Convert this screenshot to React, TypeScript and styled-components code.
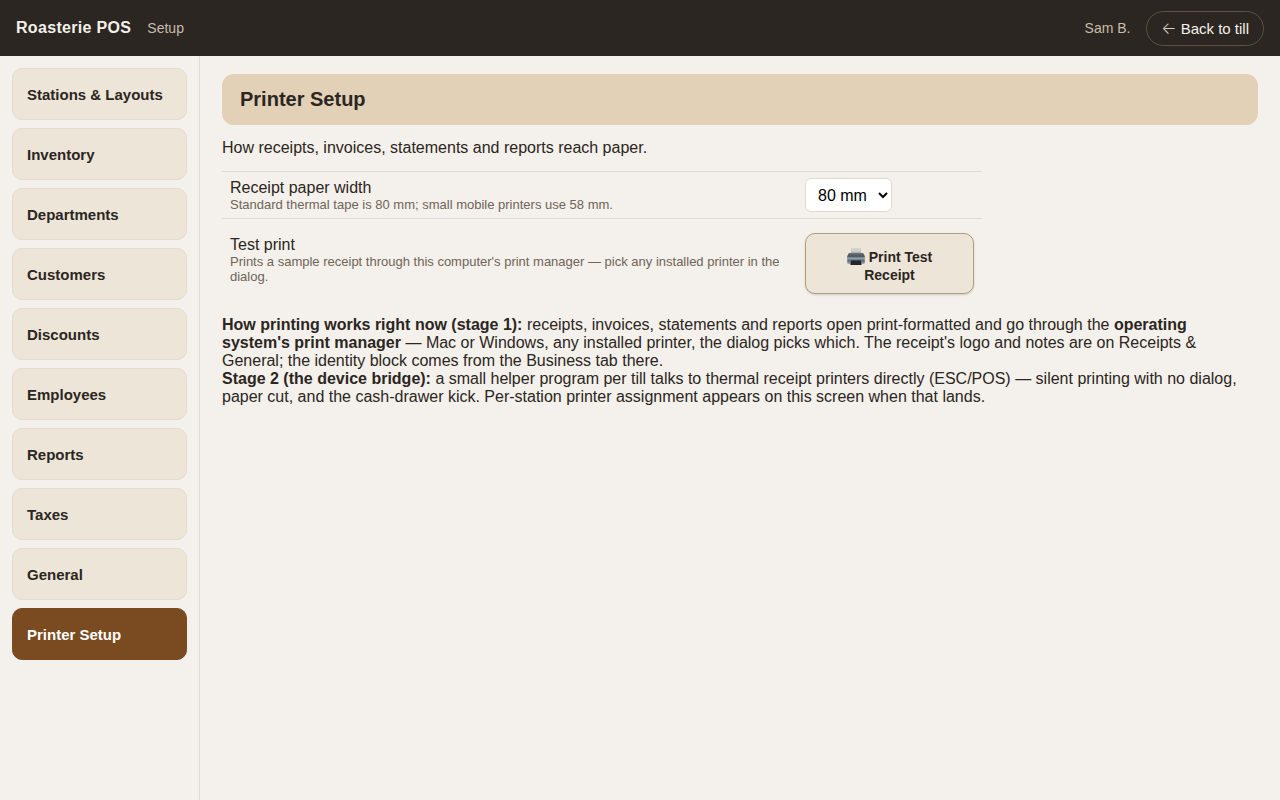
import React from "react";
import styled, { createGlobalStyle } from "styled-components";

const GlobalStyle = createGlobalStyle`
  *, *::before, *::after { box-sizing: border-box; }
  body {
    margin: 0;
    background: #f4f0eb;
    color: #2b2621;
    font-family: "Liberation Sans", Helvetica, Arial, sans-serif;
    font-size: 16px;
    line-height: 18px;
  }
  button, select { font-family: inherit; }
`;

const Page = styled.div`
  display: flex;
  flex-direction: column;
  min-height: 100vh;
`;

const TopBar = styled.header`
  display: flex;
  align-items: center;
  gap: 16px;
  height: 56px;
  padding: 0 16px;
  background: #2b2621;
  color: #f4f0eb;
`;

const Brand = styled.strong`
  letter-spacing: 0.02em;
`;

const TopNote = styled.span<{ $end?: boolean }>`
  margin-left: ${(p) => (p.$end ? "auto" : "0")};
  color: #c9bda9;
  font-size: 14px;
`;

const BackButton = styled.button`
  height: 35px;
  padding: 0 14px;
  border: 1px solid #5b5145;
  border-radius: 18px;
  background: transparent;
  color: #f4f0eb;
  font-size: 15px;
  cursor: pointer;
`;

const Arrow = styled.span`
  display: inline-flex;
  justify-content: center;
  width: 15px;
  color: #d3cec8;
  font-family: Inter, sans-serif;
  font-size: 16px;
  font-weight: 300;
  line-height: 15px;
`;

const Body = styled.div`
  display: flex;
  flex: 1;
`;

const Sidebar = styled.nav`
  display: flex;
  flex-direction: column;
  flex: none;
  gap: 8px;
  width: 200px;
  padding: 12px;
  border-right: 1px solid #dfdad2;
`;

const NavButton = styled.button<{ $active?: boolean }>`
  height: 52px;
  padding: 0 14px;
  border: 1px solid ${(p) => (p.$active ? "#7a4a20" : "#e3dccf")};
  border-radius: 10px;
  background: ${(p) => (p.$active ? "#7a4a20" : "#ede5d8")};
  color: ${(p) => (p.$active ? "#ffffff" : "#2b2621")};
  font-size: 15px;
  font-weight: 700;
  text-align: left;
  cursor: pointer;
`;

const Content = styled.main`
  flex: 1;
  min-width: 0;
  padding: 18px 22px;
`;

const Title = styled.h1`
  margin: 0 0 14px;
  padding: 14px 18px;
  border-radius: 12px;
  background: #e2d1b7;
  font-size: 20px;
  line-height: 23px;
`;

const Text = styled.p`
  margin: 0;
`;

const Settings = styled.div`
  max-width: 760px;
  margin: 14px 0 16px;
`;

const Setting = styled.div`
  display: grid;
  grid-template-columns: 1fr 169px;
  column-gap: 16px;
  align-items: center;
  padding: 6px 8px;
  border-top: 1px solid #dfdad2;
`;

const SettingName = styled.label`
  display: block;
`;

const Hint = styled.div`
  color: #6f6557;
  font-size: 13px;
  line-height: 15px;
`;

const WidthSelect = styled.select`
  width: 87px;
  height: 34px;
  padding: 0 0 0 8px;
  border: 1px solid #e0dace;
  border-radius: 6px;
  background: #ffffff;
  color: #000000;
  font-size: 16px;
`;

const PrintButton = styled.button`
  width: 100%;
  min-height: 61px;
  margin-top: 8px;
  padding: 14px 28px 9px;
  border: 1px solid #b39d7c;
  border-radius: 10px;
  background: #ede5d8;
  box-shadow: 0 1px 2px rgba(43, 38, 33, 0.18);
  color: #2b2621;
  font-size: 14px;
  font-weight: 700;
  line-height: 18px;
  cursor: pointer;
`;

const PrinterSvg = styled.svg`
  margin: -4px 4px -4px 0;
  vertical-align: 0;
`;

const PrinterIcon = () => (
  <PrinterSvg width="18" height="18" viewBox="0 0 18 18" aria-hidden="true">
    <defs>
      <linearGradient id="casing" x1="0" y1="0" x2="0" y2="1">
        <stop offset="0" stopColor="#626a72" />
        <stop offset="0.3" stopColor="#4c565f" />
        <stop offset="0.5" stopColor="#8996a1" />
        <stop offset="0.7" stopColor="#5d6872" />
        <stop offset="1" stopColor="#a9b0b6" />
      </linearGradient>
    </defs>
    <path d="M4 0h10v6H4z" fill="#d3d1ce" />
    <path d="M4 3.500h10V6H4z" fill="#b4b5b6" />
    <path d="M2 5h14l1.800 3v6.500q0 1.500-1.500 1.500H1.700q-1.500 0-1.500-1.500V8z" fill="url(#casing)" />
    <path d="M3.500 5h11l.8 1.500H2.700z" fill="#646b72" />
    <path d="M1 9.500h16V11H1z" fill="#8c9dab" />
    <path d="M4 12.500h10l.6 4.500H3.400z" fill="#24272a" />
  </PrinterSvg>
);

const sections = [
  "Stations & Layouts",
  "Inventory",
  "Departments",
  "Customers",
  "Discounts",
  "Employees",
  "Reports",
  "Taxes",
  "General",
  "Printer Setup",
];

export default function App() {
  return (
    <Page>
      <GlobalStyle />
      <TopBar>
        <Brand>Roasterie POS</Brand>
        <TopNote>Setup</TopNote>
        <TopNote $end>Sam B.</TopNote>
        <BackButton type="button">
          <Arrow>←</Arrow> Back to till
        </BackButton>
      </TopBar>
      <Body>
        <Sidebar aria-label="Setup sections">
          {sections.map((name) => (
            <NavButton key={name} type="button" $active={name === "Printer Setup"}>
              {name}
            </NavButton>
          ))}
        </Sidebar>
        <Content>
          <Title>Printer Setup</Title>
          <Text>How receipts, invoices, statements and reports reach paper.</Text>
          <Settings>
            <Setting>
              <div>
                <SettingName htmlFor="paper-width">Receipt paper width</SettingName>
                <Hint>Standard thermal tape is 80 mm; small mobile printers use 58 mm.</Hint>
              </div>
              <WidthSelect id="paper-width" defaultValue="80">
                <option value="80">80 mm</option>
                <option value="58">58 mm</option>
              </WidthSelect>
            </Setting>
            <Setting>
              <div>
                <SettingName htmlFor="test-print">Test print</SettingName>
                <Hint>
                  Prints a sample receipt through this computer's print manager — pick any
                  installed printer in the dialog.
                </Hint>
              </div>
              <PrintButton id="test-print" type="button">
                <PrinterIcon />
                Print Test Receipt
              </PrintButton>
            </Setting>
          </Settings>
          <Text>
            <strong>How printing works right now (stage 1):</strong> receipts, invoices,
            statements and reports open print-formatted and go through the{" "}
            <strong>operating system's print manager</strong> — Mac or Windows, any installed
            printer, the dialog picks which. The receipt's logo and notes are on Receipts &amp;
            General; the identity block comes from the Business tab there.
          </Text>
          <Text>
            <strong>Stage 2 (the device bridge):</strong> a small helper program per till talks
            to thermal receipt printers directly (ESC/POS) — silent printing with no dialog,
            paper cut, and the cash-drawer kick. Per-station printer assignment appears on this
            screen when that lands.
          </Text>
        </Content>
      </Body>
    </Page>
  );
}
